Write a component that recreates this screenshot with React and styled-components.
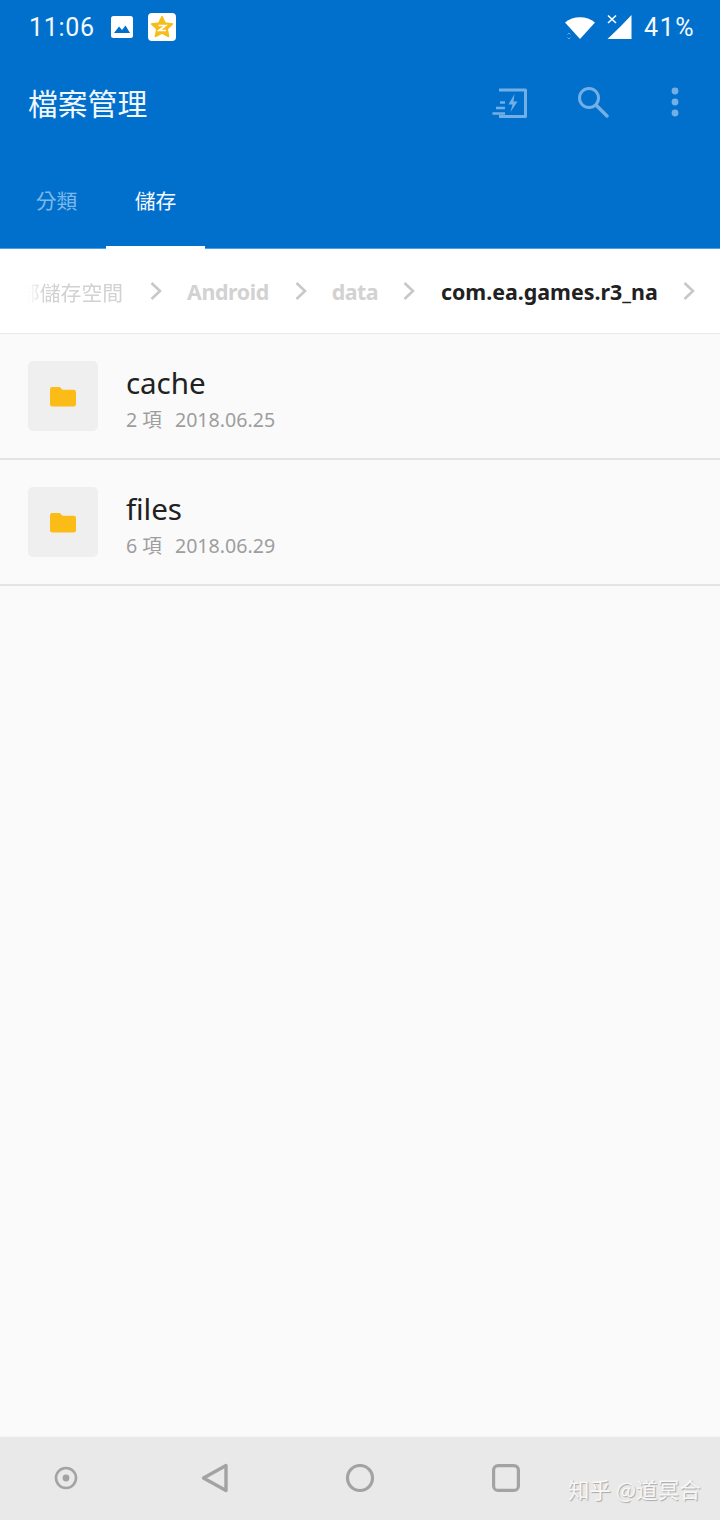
import React from "react";
import styled, { createGlobalStyle } from "styled-components";

const Global = createGlobalStyle`
  html, body { margin: 0; padding: 0; background: #fafafa; }
  * { box-sizing: border-box; }
`;
const cjk = `Roboto, "Noto Sans CJK TC", "Noto Sans CJK SC", sans-serif`;
const Page = styled.div`
  width: 720px; height: 1520px; display: flex; flex-direction: column;
  background: #fafafa; font-family: ${cjk}; overflow: hidden; position: relative;
`;
const Header = styled.header`
  background: #0170cd; height: 249px; flex: none; display: flex; flex-direction: column;
  box-shadow: inset 0 -1px 0 #4da0e6;
`;
const StatusBar = styled.div`
  height: 54px; display: flex; align-items: center; padding: 0 25px 0 29px; color: #fff;
`;
const Clock = styled.span`
  font-size: 25px; letter-spacing: 0.7px; margin-right: 16px; color: #f4f9fd;
`;
const Spacer = styled.div`flex: 1;`;
const Battery = styled.span`font-size: 25px; letter-spacing: 1.5px; margin-left: 12px; color: #f4f9fd;`;
const StatusIcon = styled.svg`
  display: block; flex: none; margin-right: ${p => p.$mr || 0}px;
`;
const Toolbar = styled.div`
  height: 98px; display: flex; align-items: flex-start; padding: 28px 41px 0 28px;
`;
const Title = styled.h1`
  margin: 0; font-size: 29.8px; line-height: 40px; font-weight: 400; color: #f2f8fd;
  font-family: "Noto Sans CJK TC", sans-serif;
`;
const ActionIcon = styled.svg`
  display: block; flex: none; margin-right: ${p => p.$mr || 0}px; margin-top: ${p => p.$mt || 0}px;
`;
const Tabs = styled.div`
  flex: 1; display: flex; align-items: stretch; padding-left: 7px;
`;
const Tab = styled.div`
  width: 99px; position: relative; display: flex; justify-content: center; padding-top: 33px;
  font-size: 20.8px; line-height: 30px; font-family: "Noto Sans CJK TC", sans-serif;
  color: ${p => (p.$active ? "#f5fafe" : "#7db8ea")};
  border-bottom: 3px solid ${p => (p.$active ? "#fff" : "transparent")};
`;
const Crumbs = styled.nav`
  height: 85px; flex: none; background: #fff; border-bottom: 1px solid #e9e9e9;
  display: flex; align-items: center; padding: 2px 0 0 28px; white-space: nowrap; overflow: hidden;
`;
const PathFade = styled.span`
  width: 95px; flex: none; display: flex; justify-content: flex-end; overflow: hidden;
  font-size: 20.8px; line-height: 30px; color: #d2d2d2;
  font-family: "Noto Sans CJK TC", sans-serif;
  -webkit-mask-image: linear-gradient(90deg, transparent 0, #000 16px);
  mask-image: linear-gradient(90deg, transparent 0, #000 16px);
`;
const Crumb = styled.span`
  font-size: 21.4px; font-weight: 700;
  color: ${p => (p.$current ? "#212121" : "#d2d2d2")};
  flex: none; font-family: "Noto Sans", Roboto, sans-serif;
  line-height: 30px; letter-spacing: ${p => p.$ls || 0}px;
`;
const Chevron = styled.svg`
  flex: none; display: block; margin: -3px ${p => p.$r}px 0 ${p => p.$l}px;
`;
const List = styled.div`flex: 1; display: flex; flex-direction: column;`;
const Row = styled.div`
  height: 126px; flex: none; display: flex; align-items: flex-start; padding: 27px 0 0 28px;
  border-bottom: 2px solid #e4e4e4;
`;
const Thumb = styled.div`
  width: 70px; height: 70px; border-radius: 5px; background: #efefef; flex: none;
  display: flex; align-items: center; justify-content: center; margin-right: 28px;
`;
const Info = styled.div`display: flex; flex-direction: column; margin-top: 2px;`;
const Name = styled.div`
  font-family: "Noto Sans", sans-serif; font-size: 29.6px; line-height: 40px; color: #212121; letter-spacing: -0.1px;
`;
const Meta = styled.div`
  display: flex; gap: 13px; font-size: 19.6px; line-height: 30px; color: #9e9e9e; margin-top: 2px;
  font-family: "Noto Sans", "Noto Sans CJK TC", sans-serif;
`;
const NavBar = styled.footer`
  height: 84px; flex: none; background: #e9e9e9; border-top: 1px solid #f6f6f6;
  position: relative;
`;
const NavSlot = styled.div`
  position: absolute; left: ${p => p.$x}px; top: ${p => p.$y}px; display: block; line-height: 0;
`;
const Watermark = styled.div`
  position: absolute; left: 568px; top: 37px; font-size: 21.4px; line-height: 30px; color: #f7f7f7;
  font-family: "Noto Sans CJK SC", sans-serif; white-space: nowrap;
  text-shadow: 1px 1px 1px #a8a8a8; letter-spacing: 0.1px;
`;

const Folder = () => (
  <svg width="26" height="21" viewBox="0 0 28 22" preserveAspectRatio="none">
    <path d="M2.5 1H10.5L13.5 4H25.5A2.5 2.5 0 0 1 28 6.5V19A2.5 2.5 0 0 1 25.5 21.5H2.5A2.5 2.5 0 0 1 0 19V3.5A2.5 2.5 0 0 1 2.5 1Z" fill="#fbbc17" />
  </svg>
);
const Chev = ({ l, r }) => (
  <Chevron $l={l} $r={r} width="14" height="20" viewBox="0 0 14 20">
    <path d="M2.5 2L11 10L2.5 18" fill="none" stroke="#c8c8c8" strokeWidth="2.6" />
  </Chevron>
);
const FileRow = ({ name, count, date }) => (
  <Row>
    <Thumb><Folder /></Thumb>
    <Info>
      <Name>{name}</Name>
      <Meta><span>{count} 項</span><span>{date}</span></Meta>
    </Info>
  </Row>
);

export default function App() {
  return (
    <Page>
      <Global />
      <Header>
        <StatusBar>
          <Clock>11:06</Clock>
          <StatusIcon $mr={15} width="22" height="22" viewBox="0 0 22 22">
            <rect width="22" height="22" rx="2.5" fill="#fff" />
            <path d="M3 17L8 10.5L11 14L14.5 9.5L19 17Z" fill="#0170cd" />
          </StatusIcon>
          <StatusIcon width="28" height="28" viewBox="0 0 28 28">
            <rect width="28" height="28" rx="4" fill="#fff" />
            <path d="M14 3.5L17.2 10L24.5 11L19.2 16L20.6 23.5L14 20L7.4 23.5L8.8 16L3.5 11L10.8 10Z" fill="#f7bd1a" stroke="#f7bd1a" strokeWidth="1.5" strokeLinejoin="round" />
            <path d="M10.5 12.5H17.5L11 17.5H18" fill="none" stroke="#fff" strokeWidth="1.7" />
          </StatusIcon>
          <Spacer />
          <StatusIcon $mr={10} width="32" height="26" viewBox="0 0 32 26">
            <path d="M1 8.5C9 1.5 23 1.5 31 8.5L16 25Z" fill="#fff" />
            <path d="M3.5 20.5L5 19L6.5 20.5M3.5 23.5L5 25L6.5 23.5" fill="none" stroke="#6cabe2" strokeWidth="1" />
          </StatusIcon>
          <StatusIcon width="26" height="26" viewBox="0 0 26 26">
            <path d="M25.5 1V25H1.5L14 13Z" fill="#fff" />
            <path d="M2 3.5L10 11M10 3.5L2 11" stroke="#fff" strokeWidth="1.6" transform="translate(0 -2)" />
          </StatusIcon>
          <Battery>41%</Battery>
        </StatusBar>
        <Toolbar>
          <Title>檔案管理</Title>
          <Spacer />
          <ActionIcon $mt={6} $mr={49} width="36" height="30" viewBox="0 0 36 30" fill="none">
            <path d="M7 2H33.5V28.5H7" stroke="#73afe5" strokeWidth="3" strokeLinejoin="round" />
            <path d="M8 14.5H13M4 20H13M0.5 25.5H13" stroke="#73afe5" strokeWidth="2.6" />
            <path d="M22.5 6L16.5 16.5H20.5L18.5 24L25.5 13.5H21.5Z" fill="#73afe5" />
          </ActionIcon>
          <ActionIcon $mt={4} $mr={62} width="32" height="32" viewBox="0 0 32 32" fill="none">
            <circle cx="12" cy="12" r="9.5" stroke="#73afe5" strokeWidth="3" />
            <path d="M19 19L30 30" stroke="#73afe5" strokeWidth="3.4" strokeLinecap="round" />
          </ActionIcon>
          <ActionIcon $mt={5} width="8" height="30" viewBox="0 0 8 30">
            <circle cx="4" cy="4" r="3.4" fill="#73afe5" />
            <circle cx="4" cy="15" r="3.4" fill="#73afe5" />
            <circle cx="4" cy="26" r="3.4" fill="#73afe5" />
          </ActionIcon>
        </Toolbar>
        <Tabs>
          <Tab>分類</Tab>
          <Tab $active>儲存</Tab>
        </Tabs>
      </Header>
      <Crumbs>
        <PathFade>部儲存空間</PathFade>
        <Chev l={26} r={24} />
        <Crumb $ls={-0.4}>Android</Crumb>
        <Chev l={25} r={24} />
        <Crumb $ls={-0.6}>data</Crumb>
        <Chev l={24} r={25} />
        <Crumb $current>com.ea.games.r3_na</Crumb>
        <Chev l={24} r={0} />
      </Crumbs>
      <List>
        <FileRow name="cache" count="2" date="2018.06.25" />
        <FileRow name="files" count="6" date="2018.06.29" />
      </List>
      <NavBar>
        <NavSlot $x={54} $y={29}>
          <svg width="24" height="24" viewBox="0 0 24 24">
            <circle cx="12" cy="12" r="10" fill="none" stroke="#a3a3a3" strokeWidth="2.6" />
            <circle cx="12" cy="12" r="3.4" fill="#a3a3a3" />
          </svg>
        </NavSlot>
        <NavSlot $x={201} $y={26}>
          <svg width="28" height="30" viewBox="0 0 28 30">
            <path d="M25 2.5V27.5L2.5 15Z" fill="none" stroke="#a3a3a3" strokeWidth="3.4" strokeLinejoin="round" />
          </svg>
        </NavSlot>
        <NavSlot $x={345} $y={27}>
          <svg width="30" height="30" viewBox="0 0 30 30">
            <circle cx="15" cy="14" r="12.5" fill="none" stroke="#a3a3a3" strokeWidth="3.2" />
          </svg>
        </NavSlot>
        <NavSlot $x={492} $y={27}>
          <svg width="28" height="28" viewBox="0 0 28 28">
            <rect x="1.6" y="1.6" width="24.8" height="24.8" rx="4.5" fill="none" stroke="#a3a3a3" strokeWidth="3.2" />
          </svg>
        </NavSlot>
        <Watermark>知乎 @道冥合</Watermark>
      </NavBar>
    </Page>
  );
}
